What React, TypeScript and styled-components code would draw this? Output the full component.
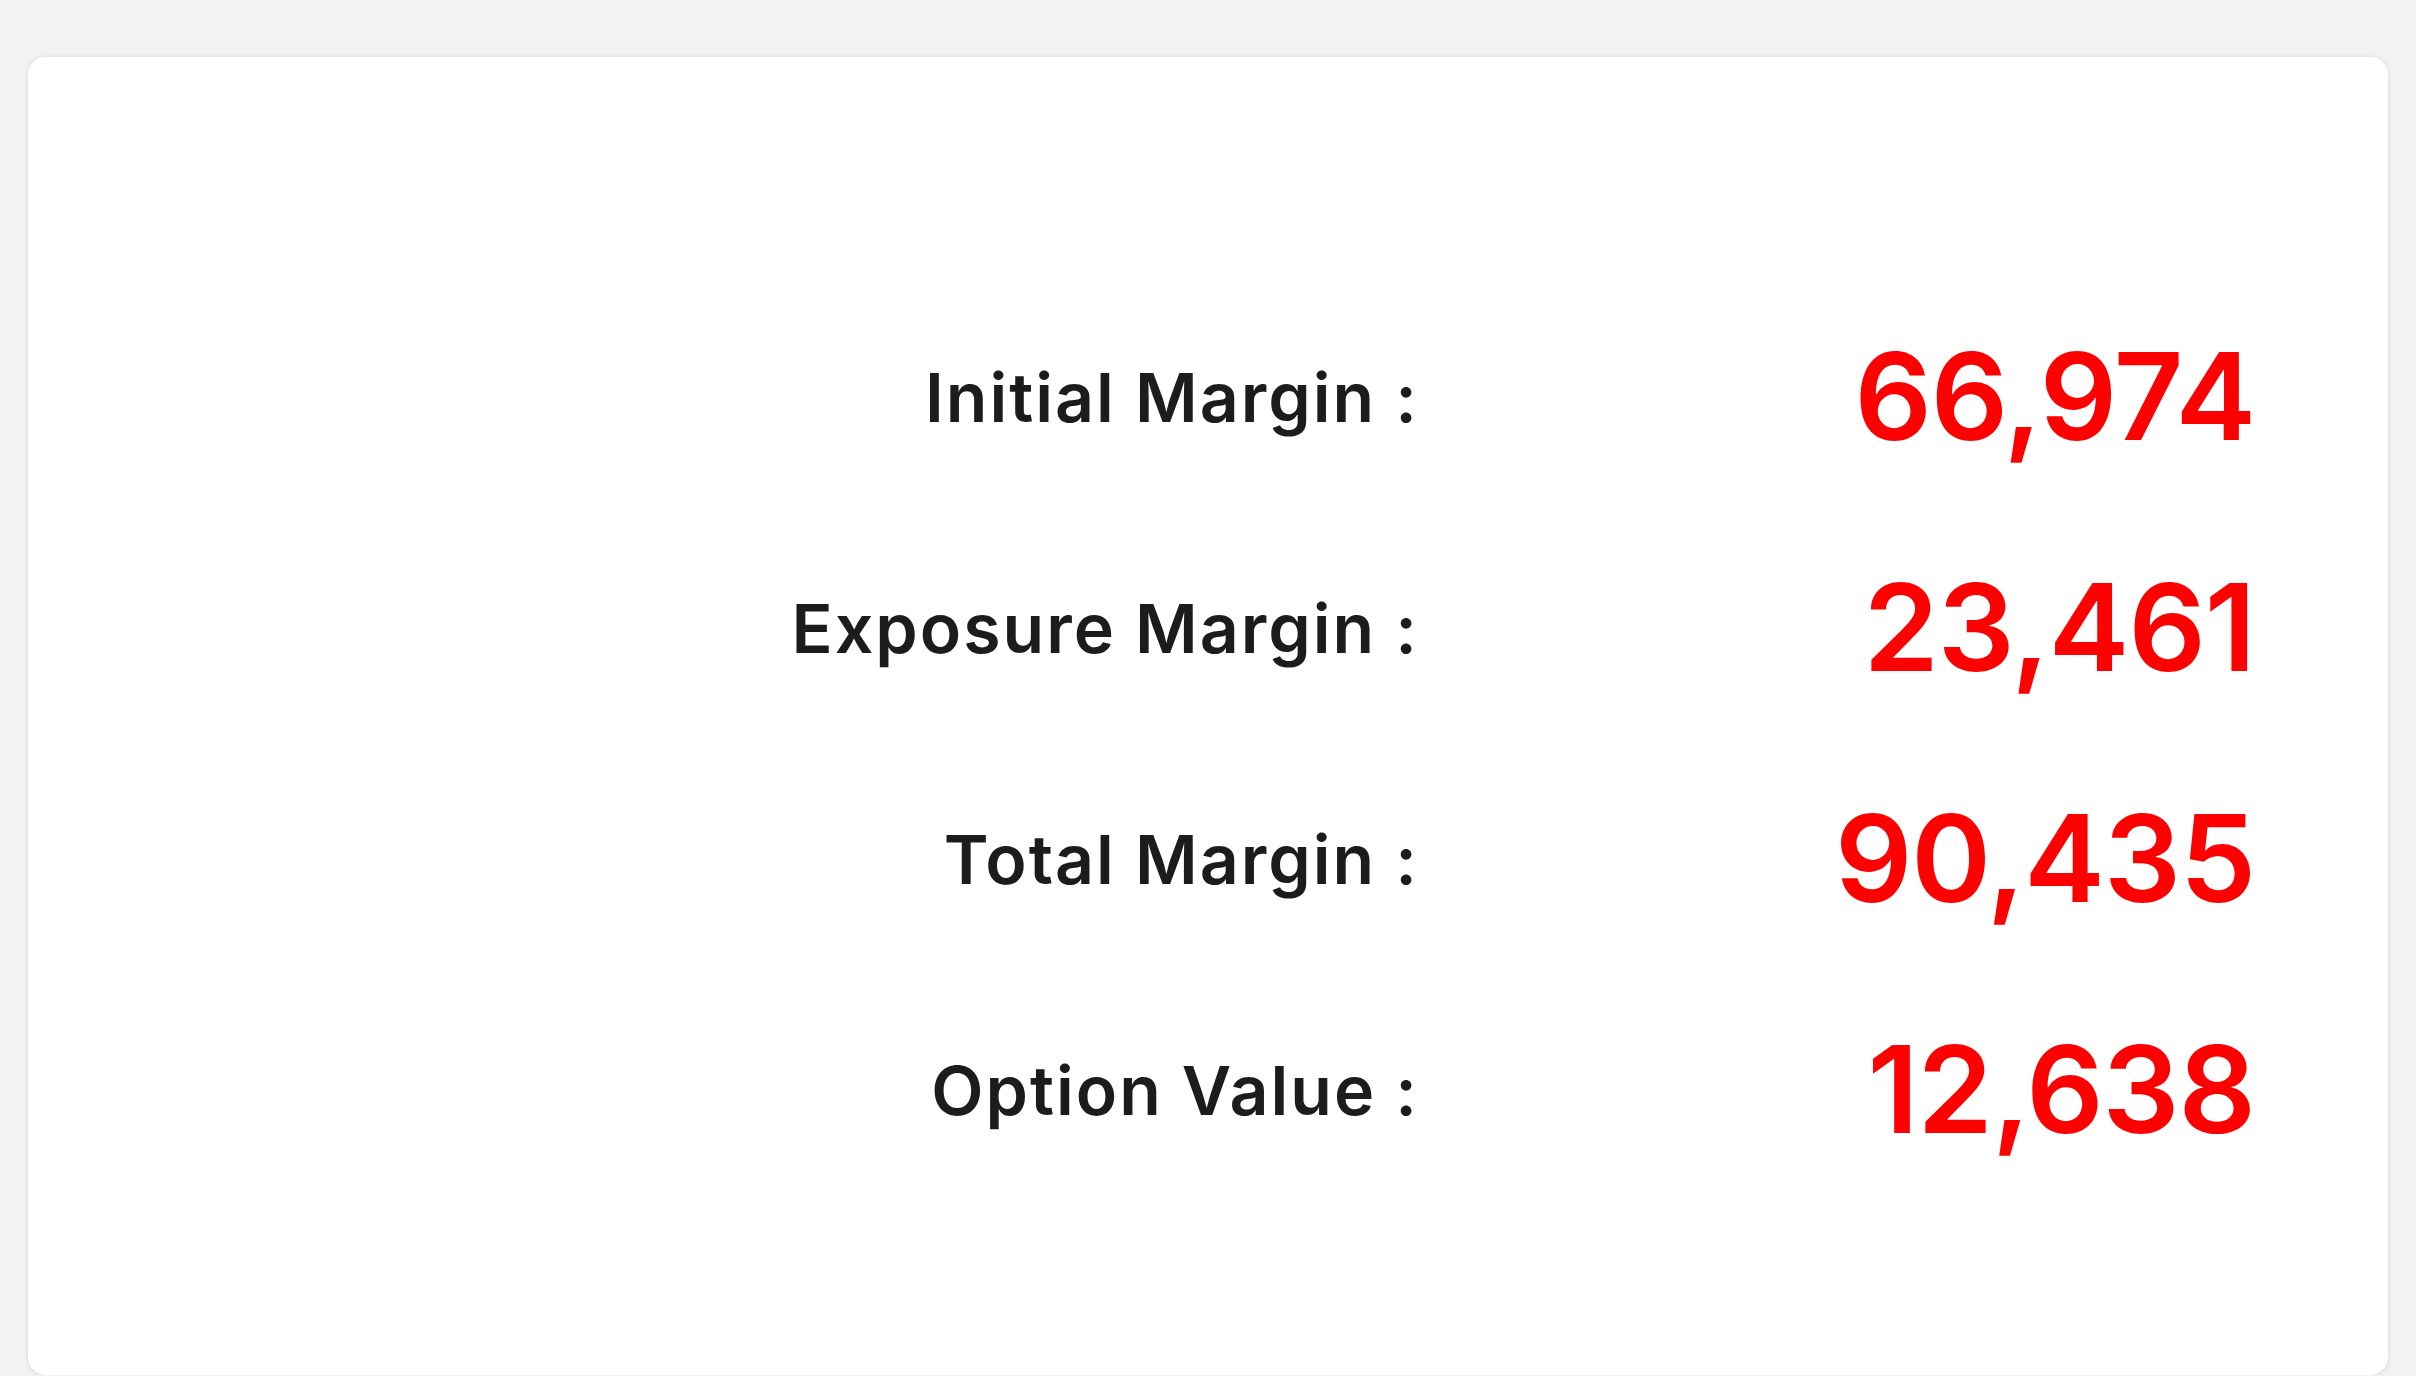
import React from "react";
import styled, { createGlobalStyle } from "styled-components";

const GlobalStyle = createGlobalStyle`
  html, body {
    margin: 0;
    padding: 0;
    background: #f2f2f2;
  }
  body {
    font-family: Inter, "Noto Sans", "Liberation Sans", sans-serif;
  }
`;

const Page = styled.div`
  padding: 57px 28px 0 28px;
  box-sizing: border-box;
`;

const Card = styled.section`
  background: #ffffff;
  border-radius: 18px;
  box-shadow: 0 0 6px rgba(0, 0, 0, 0.08), 0 1px 3px rgba(0, 0, 0, 0.06);
  height: 1318px;
  box-sizing: border-box;
  padding: 224px 133px 0 0;
`;

const Summary = styled.div`
  display: grid;
  grid-template-columns: 1fr 836px;
  grid-auto-rows: 231px;
  align-items: center;
`;

const Label = styled.div`
  text-align: right;
  font-size: 68px;
  font-weight: 600;
  color: #1c1c1c;
  line-height: 1;
  letter-spacing: 2px;
`;

const Value = styled.div`
  text-align: right;
  font-size: 121px;
  font-weight: 600;
  color: #ff0000;
  line-height: 1;
  letter-spacing: -1px;
`;

const rows = [
  { label: "Initial Margin :", value: "66,974" },
  { label: "Exposure Margin :", value: "23,461" },
  { label: "Total Margin :", value: "90,435" },
  { label: "Option Value :", value: "12,638" },
];

export default function App() {
  return (
    <>
      <GlobalStyle />
      <Page>
        <Card>
          <Summary>
            {rows.map((r) => (
              <React.Fragment key={r.label}>
                <Label>{r.label}</Label>
                <Value>{r.value}</Value>
              </React.Fragment>
            ))}
          </Summary>
        </Card>
      </Page>
    </>
  );
}
